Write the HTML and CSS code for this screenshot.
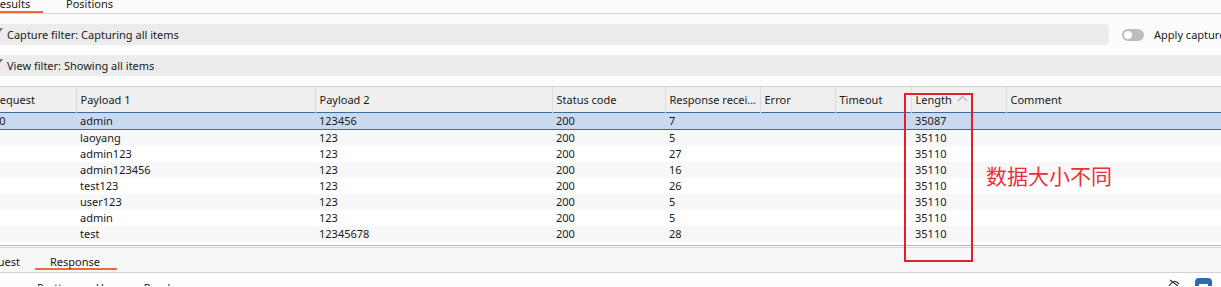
FILE: index.html
```html
<!DOCTYPE html>
<html lang="en">
<head>
    <meta charset="UTF-8" />
    <title>Intruder - Results</title>
    <link rel="stylesheet" href="styles.css">
</head>
<body>
    <div class="top-tabs">
        <div class="tab tab-results active">Results</div>
        <div class="tab tab-positions">Positions</div>
    </div>

    <div class="filter-row">
        <div class="filter-bar capture-bar"><span class="caret"></span>Capture filter: Capturing all items</div>
        <div class="toggle"><span class="knob"></span></div>
        <span class="toggle-label">Apply capture filter</span>
    </div>
    <div class="filter-row">
        <div class="filter-bar view-bar"><span class="caret"></span>View filter: Showing all items</div>
    </div>

    <div class="table-wrap">
        <table class="results">
            <colgroup>
                <col style="width:87px"><col style="width:239px"><col style="width:237px">
                <col style="width:113px"><col style="width:95px"><col style="width:75px">
                <col style="width:76px"><col style="width:95px"><col style="width:226px">
            </colgroup>
            <thead>
                <tr>
                    <th>Request</th><th>Payload 1</th><th>Payload 2</th><th>Status code</th>
                    <th>Response recei...</th><th>Error</th><th>Timeout</th>
                    <th>Length
                        <svg class="sort" width="11" height="7" viewBox="0 0 11 7">
                            <path d="M1 6 L5.5 1.5 L10 6" fill="none" stroke="#b0b0b0" stroke-width="1.1"/>
                        </svg>
                    </th>
                    <th>Comment</th>
                </tr>
            </thead>
            <tbody>
                <tr class="selected"><td>10</td><td>admin</td><td>123456</td><td>200</td><td>7</td><td></td><td></td><td>35087</td><td></td></tr>
                <tr class="odd"><td>1</td><td>laoyang</td><td>123</td><td>200</td><td>5</td><td></td><td></td><td>35110</td><td></td></tr>
                <tr><td>2</td><td>admin123</td><td>123</td><td>200</td><td>27</td><td></td><td></td><td>35110</td><td></td></tr>
                <tr class="odd"><td>4</td><td>admin123456</td><td>123</td><td>200</td><td>16</td><td></td><td></td><td>35110</td><td></td></tr>
                <tr><td>5</td><td>test123</td><td>123</td><td>200</td><td>26</td><td></td><td></td><td>35110</td><td></td></tr>
                <tr class="odd"><td>7</td><td>user123</td><td>123</td><td>200</td><td>5</td><td></td><td></td><td>35110</td><td></td></tr>
                <tr><td class="num-cyan">0</td><td>admin</td><td>123</td><td>200</td><td>5</td><td></td><td></td><td>35110</td><td></td></tr>
                <tr class="odd"><td>3</td><td>test</td><td>12345678</td><td>200</td><td>28</td><td></td><td></td><td>35110</td><td></td></tr>
                <tr><td>9</td><td>admin1</td><td>admin</td><td>200</td><td>4</td><td></td><td></td><td>35110</td><td></td></tr>
            </tbody>
        </table>
    </div>

    <div class="split"></div>

    <div class="bottom-tabs">
        <div class="tab tab-request">Request</div>
        <div class="tab tab-response active">Response</div>
    </div>

    <div class="editor-bar">
        <span class="view-tab">Pretty</span>
        <span class="view-tab">Hex</span>
        <span class="view-tab">Render</span>
        <span class="spacer"></span>
        <svg class="icon-wrap" width="12" height="10" viewBox="0 0 12 10">
            <path d="M1 9 Q6 1 11 7" fill="none" stroke="#333" stroke-width="1.2"/>
            <path d="M2 3 L10 9" fill="none" stroke="#333" stroke-width="1.2"/>
        </svg>
        <svg class="icon-menu" width="17" height="12" viewBox="0 0 17 12">
            <rect x="0" y="0" width="17" height="16" rx="4" fill="#2b6cb0"/>
            <rect x="4" y="6" width="9" height="2" fill="#fff"/>
        </svg>
    </div>

    <div class="annotation-box"></div>
    <div class="annotation-text">数据大小不同</div>
</body>
</html>
```

FILE: styles.css
```css
body {
    margin: 0;
    width: 1221px;
    height: 287px;
    overflow: hidden;
    position: relative;
    background: #fcfcfc;
    font-family: 'Noto Sans', Arial, sans-serif;
    font-size: 11px;
    color: #1a1a1a;
}
.top-tabs {
    display: flex;
    height: 13px;
    border-bottom: 1px solid #d6d6d6;
    margin-left: -15px;
    overflow: hidden;
}
.top-tabs .tab {
    height: 11px;
    line-height: 7px;
    border-bottom: 2px solid transparent;
}
.tab-results {
    width: 50px;
    padding-left: 8px;
}
.tab-results.active {
    border-bottom-color: #f06a35;
}
.tab-positions {
    margin-left: 23px;
}

.filter-row {
    display: flex;
    align-items: center;
    margin-top: 10px;
    height: 21px;
    overflow: hidden;
}
.filter-bar {
    flex-shrink: 0;
    height: 21px;
    line-height: 21px;
    background: #ececec;
    border-radius: 4px;
    margin-left: -10px;
    padding-left: 17px;
    position: relative;
}
.capture-bar {
    width: 1102px;
}
.view-bar {
    flex: 1;
    border-radius: 0;
}
.caret {
    position: absolute;
    left: 7px;
    top: 4px;
    border-left: 3px solid transparent;
    border-right: 3px solid transparent;
    border-top: 4px solid #777;
}
.toggle {
    flex-shrink: 0;
    width: 22px;
    height: 12px;
    border-radius: 6px;
    background: #bdbdbd;
    margin-left: 13px;
    position: relative;
}
.knob {
    position: absolute;
    left: 2px;
    top: 2px;
    width: 8px;
    height: 8px;
    border-radius: 50%;
    background: #fff;
}
.toggle-label {
    flex-shrink: 0;
    margin-left: 10px;
    white-space: nowrap;
}

.table-wrap {
    margin-top: 10px;
    height: 157px;
    overflow: hidden;
    border-top: 1px solid #d2d2d2;
    background: #fff;
}
.results {
    table-layout: fixed;
    border-collapse: collapse;
    margin-left: -11px;
    width: 1243px;
}
.results th {
    height: 25px;
    padding: 0 4px;
    background: #efefef;
    border-right: 1px solid #dcdcdc;
    font-weight: normal;
    text-align: left;
    white-space: nowrap;
    overflow: hidden;
}
.sort {
    margin-left: 2px;
    vertical-align: 2px;
}
.results td {
    height: 16px;
    padding: 0 4px;
    line-height: 16px;
    white-space: nowrap;
    overflow: hidden;
}
.results tr.odd td {
    background: #f7f7f7;
}
.results tr.selected td {
    background: #c9daf0;
    border-top: 1px solid #3d6c9e;
    border-bottom: 1px solid #3d6c9e;
    height: 14px;
}
.num-cyan {
    color: #1aa7c9;
}

.split {
    height: 1px;
    border-top: 1px solid #b5b5b5;
    border-bottom: 1px solid #d6d6d6;
    margin-top: 1px;
}
.bottom-tabs {
    display: flex;
    height: 24px;
    background: #f7f7f7;
    border-bottom: 1px solid #d2d2d2;
    margin-left: -22px;
    overflow: hidden;
}
.bottom-tabs .tab {
    height: 22px;
    line-height: 28px;
    border-bottom: 2px solid transparent;
}
.tab-request {
    width: 57px;
}
.tab-response {
    width: 82px;
    text-align: center;
    box-sizing: border-box;
    padding-right: 2px;
}
.tab-response.active {
    border-bottom-color: #f06a35;
}

.editor-bar {
    display: flex;
    align-items: flex-start;
    height: 13px;
    background: #fff;
    padding-left: 37px;
    overflow: hidden;
}
.view-tab {
    margin-top: 8px;
    margin-right: 28px;
    line-height: 14px;
}
.spacer {
    flex: 1;
}
.icon-wrap {
    margin-top: 4px;
    margin-right: 15px;
}
.icon-menu {
    margin-top: 5px;
    margin-right: 9px;
}

.annotation-box {
    position: absolute;
    left: 904px;
    top: 93px;
    width: 65px;
    height: 165px;
    border: 2px solid #e0202a;
}
.annotation-text {
    position: absolute;
    left: 986px;
    top: 160px;
    font-family: 'Noto Sans CJK SC', sans-serif;
    font-size: 21px;
    line-height: 30px;
    color: #e8303a;
}
```
